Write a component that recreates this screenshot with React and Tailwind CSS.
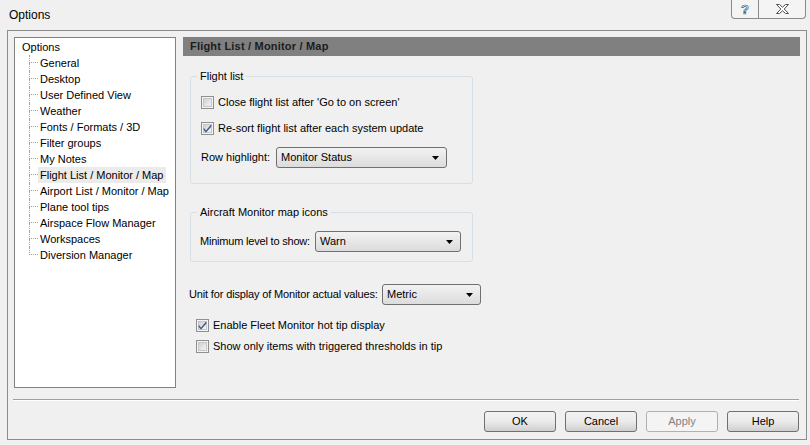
import React from "react";

const treeItems = [
    "General",
    "Desktop",
    "User Defined View",
    "Weather",
    "Fonts / Formats / 3D",
    "Filter groups",
    "My Notes",
    "Flight List / Monitor / Map",
    "Airport List / Monitor / Map",
    "Plane tool tips",
    "Airspace Flow Manager",
    "Workspaces",
    "Diversion Manager",
];

const selectedItem = "Flight List / Monitor / Map";

const Checkbox = ({ checked }) => (
    <svg width="13" height="13" viewBox="0 0 13 13" className="shrink-0">
        <defs>
            <linearGradient id="cbfill" x1="0" y1="0" x2="1" y2="1">
                <stop offset="0" stopColor="#cbcfd5" />
                <stop offset="1" stopColor="#f6f6f6" />
            </linearGradient>
        </defs>
        <rect x="0.5" y="0.5" width="12" height="12" fill="#f4f4f4" stroke="#8e8f8f" />
        <rect x="2.5" y="2.5" width="8" height="8" fill="url(#cbfill)" stroke="#c6c6c6" />
        {checked && (
            <path d="M3 6.5 L5 9 L10 3 L10 4.5 L5 10.2 L3 8 Z" fill="#3e4f85" stroke="#3e4f85" strokeWidth="0.6" />
        )}
    </svg>
);

const Combo = ({ value, width }) => (
    <div
        className={`${width} h-[21px] shrink-0 flex items-center justify-between border border-[#707070] rounded-[3px] bg-gradient-to-b from-[#f2f2f2] to-[#dcdcdc] pl-[4px] pr-[7px]`}
    >
        <span>{value}</span>
        <svg width="7" height="4" viewBox="0 0 7 4">
            <path d="M0 0 H7 L3.5 4 Z" fill="#000" />
        </svg>
    </div>
);

const CheckRow = ({ checked, label, className }) => (
    <div className={`h-[16px] flex items-center gap-[4px] ${className}`}>
        <Checkbox checked={checked} />
        <span>{label}</span>
    </div>
);

const Button = ({ children, disabled }) => (
    <div
        className={
            disabled
                ? "w-[72px] h-[21px] flex items-center justify-center border border-[#adb2b5] rounded-[3px] bg-[#f4f4f4] text-[#838383]"
                : "w-[72px] h-[21px] flex items-center justify-center border border-[#707070] rounded-[3px] bg-gradient-to-b from-[#f2f2f2] via-[#ebebeb] to-[#cfcfcf]"
        }
    >
        {children}
    </div>
);

const TreeRow = ({ label, last }) => (
    <div className="h-[16px] flex items-stretch pl-[14px]">
        <div className="w-[9px] flex flex-col">
            <div className="h-[8px] border-l border-b border-dotted border-[#a0a0a0]" />
            <div className={last ? "flex-1" : "flex-1 border-l border-dotted border-[#a0a0a0]"} />
        </div>
        <div
            className={`flex items-center px-[2px] ${
                label === selectedItem ? "bg-[#ebebeb]" : ""
            }`}
        >
            {label}
        </div>
    </div>
);

export default function App() {
    return (
        <div
            className="w-[810px] h-[445px] overflow-hidden bg-[#f0f0f0] text-[11px] leading-[13px] text-black"
            style={{ fontFamily: '"Liberation Sans", Arial, sans-serif' }}
        >
            {/* title bar */}
            <div className="h-[30px] flex items-start justify-between">
                <div className="pl-[9px] pt-[8px] text-[12px] leading-[15px]">Options</div>
                <div className="flex mr-[4px]">
                    <div className="w-[28px] h-[19px] flex items-center justify-center border border-t-0 border-[#8a8a8a] rounded-bl-[4px] bg-[#f4f4f4]">
                        <span
                            className="text-[13px] font-bold text-white leading-none"
                            style={{ WebkitTextStroke: "0.7px #505050" }}
                        >
                            ?
                        </span>
                    </div>
                    <div className="w-[47px] h-[19px] flex items-center justify-center border border-l-0 border-t-0 border-[#8a8a8a] rounded-br-[4px] bg-[#f4f4f4]">
                        <svg width="13" height="10" viewBox="0 0 13 10">
                            <path
                                d="M0.5 0.5 H3.5 L6.5 3.2 L9.5 0.5 H12.5 L8.2 5 L12.5 9.5 H9.5 L6.5 6.8 L3.5 9.5 H0.5 L4.8 5 Z"
                                fill="#fff"
                                stroke="#505050"
                                strokeWidth="1"
                            />
                        </svg>
                    </div>
                </div>
            </div>

            {/* main frame */}
            <div className="ml-[7px] mr-[3px] h-[410px] border border-[#8c8c8c] flex flex-col">
                <div className="flex gap-[7px] pt-[6px] pl-[6px] pr-[6px]">
                    {/* tree */}
                    <div className="w-[162px] h-[351px] shrink-0 bg-white border border-[#828282] pt-[1px]">
                        <div className="h-[16px] flex items-center pl-[7px]">Options</div>
                        {treeItems.map((item, i) => (
                            <TreeRow key={item} label={item} last={i === treeItems.length - 1} />
                        ))}
                    </div>

                    {/* page */}
                    <div className="flex-1 flex flex-col">
                        <div className="h-[19px] bg-[#808080] flex items-center pl-[7px] font-bold tracking-[0.2px] text-[#1c1c1c]">
                            Flight List / Monitor / Map
                        </div>

                        <fieldset className="ml-[7px] w-[283px] mt-[13px] border border-[#d5dfe5] rounded-[3px] pb-[15px]">
                            <legend className="ml-[6px] px-[3px] leading-[14px]">Flight list</legend>
                            <CheckRow className="mt-[11px] ml-[10px]" label="Close flight list after 'Go to on screen'" />
                            <CheckRow className="mt-[10px] ml-[10px]" checked label="Re-sort flight list after each system update" />
                            <div className="mt-[11px] ml-[10px] flex items-center">
                                <span className="w-[75px] whitespace-nowrap">Row highlight:</span>
                                <Combo value="Monitor Status" width="w-[171px]" />
                            </div>
                        </fieldset>

                        <fieldset className="ml-[7px] w-[283px] mt-[21px] border border-[#d5dfe5] rounded-[3px] pb-[9px]">
                            <legend className="ml-[6px] px-[3px] leading-[14px]">Aircraft Monitor map icons</legend>
                            <div className="mt-[12px] ml-[9px] flex items-center">
                                <span className="w-[115px] whitespace-nowrap tracking-[-0.2px]">Minimum level to show:</span>
                                <Combo value="Warn" width="w-[146px]" />
                            </div>
                        </fieldset>

                        <div className="mt-[22px] ml-[6px] flex items-center">
                            <span className="w-[193px] whitespace-nowrap tracking-[-0.15px]">
                                Unit for display of Monitor actual values:
                            </span>
                            <Combo value="Metric" width="w-[99px]" />
                        </div>
                        <CheckRow className="mt-[12px] ml-[13px]" checked label="Enable Fleet Monitor hot tip display" />
                        <CheckRow className="mt-[5px] ml-[13px]" label="Show only items with triggered thresholds in tip" />
                    </div>
                </div>

                <div className="mt-[11px] ml-[5px] mr-[7px] border-t border-[#a0a0a0] border-b border-b-white" />

                <div className="mt-[10px] mr-[7px] flex justify-end gap-[9px]">
                    <Button>OK</Button>
                    <Button>Cancel</Button>
                    <Button disabled>Apply</Button>
                    <Button>Help</Button>
                </div>
            </div>
        </div>
    );
}
